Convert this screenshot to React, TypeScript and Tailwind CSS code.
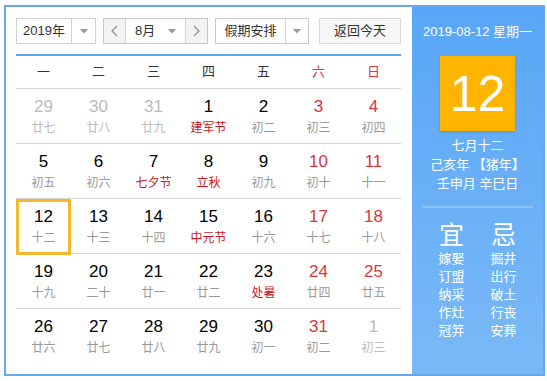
import React from "react";

type Day = { n: number; l: string; muted?: boolean; red?: boolean; fest?: boolean; today?: boolean };

const rows: Day[][] = [
  [
    { n: 29, l: "廿七", muted: true },
    { n: 30, l: "廿八", muted: true },
    { n: 31, l: "廿九", muted: true },
    { n: 1, l: "建军节", fest: true },
    { n: 2, l: "初二" },
    { n: 3, l: "初三", red: true },
    { n: 4, l: "初四", red: true },
  ],
  [
    { n: 5, l: "初五" },
    { n: 6, l: "初六" },
    { n: 7, l: "七夕节", fest: true },
    { n: 8, l: "立秋", fest: true },
    { n: 9, l: "初九" },
    { n: 10, l: "初十", red: true },
    { n: 11, l: "十一", red: true },
  ],
  [
    { n: 12, l: "十二", today: true },
    { n: 13, l: "十三" },
    { n: 14, l: "十四" },
    { n: 15, l: "中元节", fest: true },
    { n: 16, l: "十六" },
    { n: 17, l: "十七", red: true },
    { n: 18, l: "十八", red: true },
  ],
  [
    { n: 19, l: "十九" },
    { n: 20, l: "二十" },
    { n: 21, l: "廿一" },
    { n: 22, l: "廿二" },
    { n: 23, l: "处暑", fest: true },
    { n: 24, l: "廿四", red: true },
    { n: 25, l: "廿五", red: true },
  ],
  [
    { n: 26, l: "廿六" },
    { n: 27, l: "廿七" },
    { n: 28, l: "廿八" },
    { n: 29, l: "廿九" },
    { n: 30, l: "初一" },
    { n: 31, l: "初二", red: true },
    { n: 1, l: "初三", muted: true },
  ],
];

const weekdays = ["一", "二", "三", "四", "五", "六", "日"];

function Caret() {
  return (
    <svg width="8" height="5" viewBox="0 0 8 5">
      <polygon points="0,0 8,0 4,4.5" fill="#999" />
    </svg>
  );
}

function Chevron({ dir }: { dir: "l" | "r" }) {
  return (
    <svg width="7" height="12" viewBox="0 0 7 12">
      <polyline
        points={dir === "l" ? "6,1 1,6 6,11" : "1,1 6,6 1,11"}
        fill="none"
        stroke="#888"
        strokeWidth="1.1"
      />
    </svg>
  );
}

export default function App() {
  return (
    <div
      className="w-[547px] h-[381px] bg-white pt-[5px] pl-[4px]"
      style={{ fontFamily: '"Liberation Sans", "Noto Sans CJK SC", sans-serif' }}
    >
      <div className="w-[541px] h-[371px] border-2 border-[#62a8f2] flex">
        {/* left */}
        <div className="w-[406px] h-full pl-[10px] pt-[11px]">
          <div className="flex items-center h-[26px] text-[13px] text-[#333]">
            <div className="flex h-[26px] w-[80px] border border-[#d3d3d3] bg-white">
              <div className="w-[55px] flex items-center justify-center border-r border-[#d3d3d3]">2019年</div>
              <div className="flex-1 flex items-center justify-center"><Caret /></div>
            </div>
            <div className="flex h-[26px] w-[105px] border border-[#c8c8c8] ml-[7px]">
              <div className="w-[22px] flex items-center justify-center bg-[#f3f3f3] border-r border-[#d3d3d3]"><Chevron dir="l" /></div>
              <div className="w-[60px] flex items-center bg-white border-r border-[#d3d3d3]">
                <span className="ml-[9px]">8月</span>
                <span className="ml-auto mr-[9px] flex"><Caret /></span>
              </div>
              <div className="flex-1 flex items-center justify-center bg-[#f3f3f3]"><Chevron dir="r" /></div>
            </div>
            <div className="flex h-[26px] w-[94px] border border-[#c8c8c8] ml-[7px] bg-white">
              <div className="w-[70px] flex items-center justify-center border-r border-[#d3d3d3]">假期安排</div>
              <div className="flex-1 flex items-center justify-center"><Caret /></div>
            </div>
            <div className="flex h-[26px] w-[82px] border border-[#d8d8d8] ml-[10px] bg-[#f7f7f7] items-center justify-center">
              返回今天
            </div>
          </div>
          <div className="w-[385px] mt-[10px] border-t-2 border-[#5aa6f0]">
            <div className="grid grid-cols-7 h-[33px] items-center border-b border-[#d6d6d6] text-[13px]">
              {weekdays.map((w, i) => (
                <div key={w} className={`text-center ${i >= 5 ? "text-[#d9363e]" : "text-[#333]"}`}>{w}</div>
              ))}
            </div>
            {rows.map((r, ri) => (
              <div key={ri} className={`grid grid-cols-7 h-[55px] ${ri < 4 ? "border-b border-[#d6d6d6]" : ""}`}>
                {r.map((d, di) => (
                  <div
                    key={di}
                    className={`flex flex-col items-center ${d.today ? "border-[3px] border-[#f6b72a] -mb-[2px] pt-[5px]" : "pt-[8px]"}`}
                  >
                    <div
                      className={`text-[17px] leading-[20px] ${d.muted ? "text-[#bbbbbb]" : d.red ? "text-[#d9363e]" : "text-black"}`}
                    >
                      {d.n}
                    </div>
                    <div
                      className={`text-[12px] leading-[16px] mt-[3px] ${d.muted ? "text-[#bbbbbb]" : d.fest ? "text-[#c9151e]" : "text-[#999]"}`}
                    >
                      {d.l}
                    </div>
                  </div>
                ))}
              </div>
            ))}
          </div>
        </div>
        {/* right */}
        <div className="flex-1 h-full bg-gradient-to-b from-[#58a6f6] to-[#7ab9f8] flex flex-col items-center text-white">
          <div className="mt-[17px] text-[13px] leading-[16px]">2019-08-12 星期一</div>
          <div className="mt-[16px] w-[75px] h-[75px] bg-[#ffb400] flex items-center justify-center text-[50px] leading-none shadow-[0_1px_2px_rgba(0,0,0,0.15)]">
            12
          </div>
          <div className="mt-[5px] text-[13px] leading-[19px] text-center">
            <div>七月十二</div>
            <div>己亥年 【猪年】</div>
            <div>壬申月 辛巳日</div>
          </div>
          <div className="mt-[13px] w-[110px] h-[2px] bg-[#8cc3f8]" />
          <div className="mt-[12px] flex gap-[26px] text-[13px] leading-[18px]">
            <div className="flex flex-col items-center">
              <div className="text-[25px] leading-[30px]">宜</div>
              <div>嫁娶</div>
              <div>订盟</div>
              <div>纳采</div>
              <div>作灶</div>
              <div>冠笄</div>
            </div>
            <div className="flex flex-col items-center">
              <div className="text-[25px] leading-[30px]">忌</div>
              <div>掘井</div>
              <div>出行</div>
              <div>破土</div>
              <div>行丧</div>
              <div>安葬</div>
            </div>
          </div>
        </div>
      </div>
    </div>
  );
}
